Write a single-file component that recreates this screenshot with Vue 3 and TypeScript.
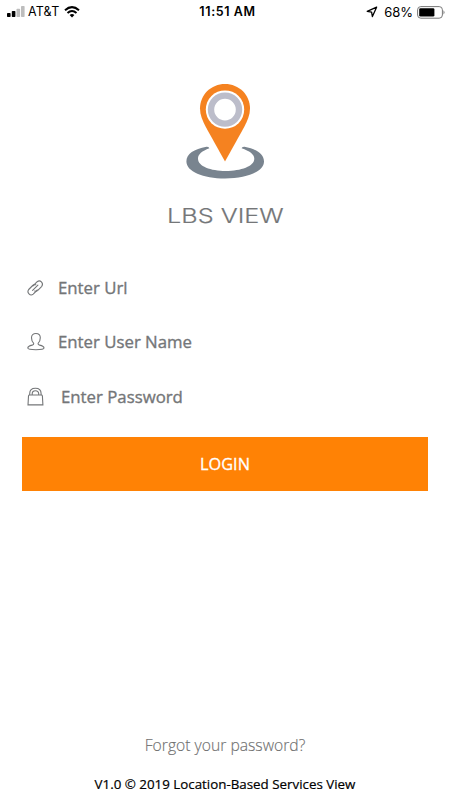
<script setup lang="ts">
import { reactive } from 'vue'

type FieldKey = 'url' | 'user' | 'password'

interface Field {
  key: FieldKey
  label: string
  type: string
}

const fields: Field[] = [
  { key: 'url', label: 'Enter Url', type: 'text' },
  { key: 'user', label: 'Enter User Name', type: 'text' },
  { key: 'password', label: 'Enter Password', type: 'password' },
]

const form = reactive<Record<FieldKey, string>>({ url: '', user: '', password: '' })
</script>

<template>
  <main class="screen">
    <header class="status">
      <div class="carrier">
        <svg class="signal" width="18" height="12" viewBox="0 0 18 12">
          <rect x="0" y="7" width="3.6" height="4" rx=".7" fill="#000" />
          <rect x="4.8" y="5" width="3.6" height="6" rx=".7" fill="#000" />
          <rect x="9.5" y="2.7" width="3.6" height="8.3" rx=".7" fill="#bdbdbd" />
          <rect x="14" y="0" width="3.6" height="11" rx=".7" fill="#bdbdbd" />
        </svg>
        <span class="carrier-name">AT&amp;T</span>
        <svg width="16" height="12" viewBox="0 0 16 12" fill="none" stroke="#000" stroke-width="2">
          <path d="M1 4.3Q8-2 15 4.3" />
          <path d="M3.5 7Q8 3 12.5 7" />
          <path d="M8 11.4L5.6 9Q8 6.9 10.4 9Z" fill="#000" stroke="none" />
        </svg>
      </div>
      <time class="clock">11:51 AM</time>
      <div class="power">
        <svg width="12" height="12" viewBox="0 0 12 12" fill="none" stroke="#000" stroke-width="1.3" stroke-linejoin="round">
          <path d="M10.6 1.2L1.2 5.3L5.6 6.1L6.4 10.6Z" />
        </svg>
        <span class="percent">68%</span>
        <svg class="battery" width="28" height="13" viewBox="0 0 28 13">
          <rect x=".6" y=".6" width="24.8" height="11.6" rx="3.2" fill="none" stroke="#777" stroke-width="1" />
          <rect x="2.2" y="2.2" width="15.2" height="8.4" rx="1.3" fill="#000" />
          <path d="M26.5 4.3Q28.5 6.4 26.5 8.5Z" fill="#777" />
        </svg>
      </div>
    </header>

    <section class="brand">
      <svg width="80" height="98" viewBox="0 0 80 98">
        <path
          d="M21.5 62.8C9 65 1.4 70 1.4 77.4C1.4 87.4 18 94.4 40 94.4S79 87.4 79 77.4C79 70 71 65 59.5 62.8Q56.8 62.6 56.6 64.3C64.5 67 69.3 70.3 69.3 74.8C69.3 82.3 56 87 40.8 87S13 82.3 13 74.8C13 70.3 17 67 24.4 64.3Q24 62.5 21.5 62.8Z"
          fill="#79848f"
        />
        <path d="M40 0C26 0 15 10.8 15 24.5C15 31 17.5 36.5 20.8 43L40 77.4L59.2 43C62.5 36.5 65 31 65 24.5C65 10.8 54 0 40 0Z" fill="#f58220" />
        <circle cx="40" cy="25.6" r="19.2" fill="#fff" />
        <circle cx="40" cy="25.6" r="14" fill="none" stroke="#bcbdca" stroke-width="6.4" />
      </svg>
      <h1 class="wordmark">LBS VIEW</h1>
    </section>

    <form class="login" @submit.prevent>
      <label v-for="field in fields" :key="field.key" class="field" :class="field.key">
        <svg class="icon" width="18" height="20" viewBox="0 0 18 20" fill="none" stroke="#747678" stroke-width="1.1">
          <g v-if="field.key === 'url'" stroke-linecap="round" stroke-linejoin="round">
            <path d="M6 7.9L10.2 3.7Q12.4 1.9 14.4 3.9T14.8 8.3L10.8 12.3Q9.4 13.6 7.7 13" />
            <path d="M10.3 12L6.2 16.1Q4 17.9 2 15.9T1.7 11.5L5.7 7.5Q7.1 6.2 8.8 6.8" />
            <path d="M5.6 12.4L10.9 7.1" />
          </g>
          <g v-else-if="field.key === 'user'">
            <path d="M6.7 11.3C4.8 9.4 4.5 7.6 4.5 5.7C4.5 3 6.3 1.5 8.9 1.5S13.3 3 13.3 5.7C13.3 7.6 13 9.4 11.1 11.3Q10.8 12.7 12.6 13.1C15.8 13.8 17 14.5 17 16Q17 17.7 8.9 17.7T.8 16C.8 14.5 2 13.8 5.2 13.1Q7 12.7 6.7 11.3Z" />
          </g>
          <g v-else>
            <path d="M1.5 9L1 17.9H15.9L15.4 9Q15.3 8 14.3 8H2.6Q1.6 8 1.5 9Z" />
            <path d="M2.7 8V6.6Q2.7 1.3 8.4 1.3T14.1 6.6V8M5.2 8V6.8Q5.2 3.7 8.4 3.7T11.7 6.8V8" />
          </g>
        </svg>
        <input v-model="form[field.key]" class="input" :type="field.type" :placeholder="field.label" />
      </label>
      <button class="submit" type="submit">LOGIN</button>
    </form>

    <footer class="footer">
      <a class="forgot">Forgot your password?</a>
      <small class="version">V1.0 © 2019 Location-Based Services View</small>
    </footer>
  </main>
</template>

<style>
body {
  margin: 0;
  background: #fff;
}
</style>

<style scoped>
.screen {
  box-sizing: border-box;
  display: flex;
  flex-direction: column;
  width: 100%;
  height: 800px;
  overflow: hidden;
  background: #fff;
  font-family: "Open Sans", "Noto Sans", sans-serif;
}
.status {
  display: grid;
  grid-template-columns: 1fr auto 1fr;
  align-items: center;
  height: 24px;
  padding: 0 5px 0 7px;
  color: #000;
  font-family: Inter, "Liberation Sans", sans-serif;
  font-size: 13px;
  line-height: 24px;
}
.carrier,
.power {
  display: flex;
  align-items: center;
}
.carrier-name {
  margin: 0 5px 0 3px;
  font-size: 12.5px;
  letter-spacing: 0.2px;
}
.clock {
  padding-left: 3px;
  font-size: 12.5px;
  font-weight: 600;
  letter-spacing: 0.6px;
}
.power {
  justify-content: flex-end;
}
.percent {
  margin: 0 4px 0 6px;
}
.brand {
  display: flex;
  flex-direction: column;
  align-items: center;
  padding-top: 60px;
}
.wordmark {
  margin: 19px 0 0;
  color: #747678;
  font-family: Inter, sans-serif;
  font-size: 20.5px;
  font-weight: 300;
  line-height: 30px;
  white-space: nowrap;
  transform: scaleX(1.23);
  -webkit-text-stroke: 0.2px #747678;
}
.login {
  display: flex;
  flex-direction: column;
  padding: 30px 22px 0;
}
.field {
  display: flex;
  align-items: center;
  height: 54.3px;
  padding-left: 5px;
}
.icon {
  flex: none;
}
.input {
  flex: 1;
  min-width: 0;
  margin-left: 13px;
  padding: 0;
  border: 0;
  outline: 0;
  background: transparent;
  color: #747678;
  font: 400 16.8px/24px "Open Sans", "Noto Sans", sans-serif;
  -webkit-text-stroke: 0.35px #747678;
}
.password .input {
  margin-left: 16px;
}
.input::placeholder {
  color: #747678;
  opacity: 1;
}
.submit {
  height: 54px;
  margin-top: 13.1px;
  padding: 0;
  border: 0;
  background: #ff8205;
  color: #fff;
  font: 400 16.3px/54px "Open Sans", "Noto Sans", sans-serif;
  -webkit-text-stroke: 0.3px #fff;
}
.footer {
  display: flex;
  flex-direction: column;
  align-items: center;
  margin-top: auto;
  padding-bottom: 6px;
}
.forgot {
  color: #707070;
  font-size: 15.7px;
  font-weight: 300;
  line-height: 24px;
  -webkit-text-stroke: 0.15px #707070;
}
.version {
  margin-top: 17px;
  color: #000;
  font-size: 13.35px;
  line-height: 20px;
  -webkit-text-stroke: 0.2px #000;
}
</style>
